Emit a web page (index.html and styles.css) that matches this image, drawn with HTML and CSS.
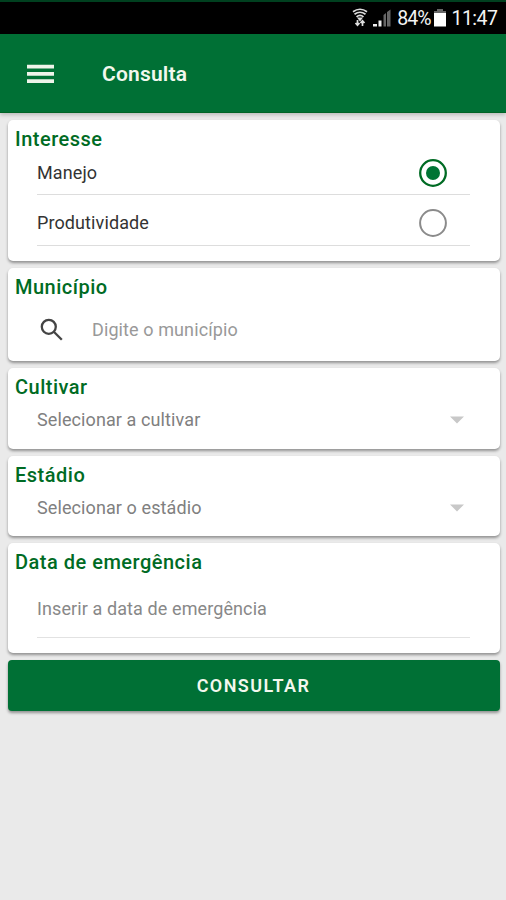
FILE: index.html
```html
<!DOCTYPE html>
<html lang="pt-BR">
<head>
<meta charset="utf-8">
<title>Consulta</title>
<link rel="stylesheet" href="styles.css">
</head>
<body>
<div class="status">
  <svg class="wifi" width="16" height="19" viewBox="0 0 16 19" fill="none" stroke="#ddd" stroke-width="1.7"><path d="M1 3.800Q8-1.300 15 3.800M2.500 6.300Q8 2.200 13.500 6.300M4.500 8.800Q8 6 11.500 8.800"/><path d="M5 9.500h6l-3 4z" fill="#ddd" stroke="none"/><path d="M5.500 12v5M3.500 15l2 2.300 2-2.300M10.500 18v-5M8.500 15l2-2.300 2 2.300"/></svg>
  <svg class="signal" width="18" height="18" viewBox="0 0 18 18"><path fill="#eee" d="M0 15h4v2.500H0zM5.500 11.500h3v6h-3z"/><path fill="#666" d="M10.500 6l2.500-2v13.500h-2.500zM14 3l3.500-2.500v17H14z"/></svg>
  <span class="percent">84%</span>
  <svg class="battery" width="12" height="18" viewBox="0 0 12 18"><path fill="#666" d="M3 0h6v2h3v3H0V2h3z"/><path fill="#fff" d="M0 4h12v13.500H0z"/></svg>
  <span class="clock">11:47</span>
</div>
<header class="bar">
  <svg width="27" height="20" viewBox="0 0 27 20" fill="#eef4ea"><path d="M0 .8h27v3.700H0zM0 8h27v3.700H0zM0 15.300h27V19H0z"/></svg>
  <h1>Consulta</h1>
</header>
<main>
  <section class="card interest">
    <h2>Interesse</h2>
    <div class="option"><span>Manejo</span><svg class="radio" width="30" height="30" viewBox="0 0 30 30"><circle cx="15" cy="15" r="12.800" fill="none" stroke="#006b24" stroke-width="2.300"/><circle cx="15" cy="15" r="7" fill="#007434"/></svg></div>
    <div class="option"><span>Produtividade</span><svg class="radio" width="30" height="30" viewBox="0 0 30 30"><circle cx="15" cy="15" r="12.900" fill="none" stroke="#8b8b8b" stroke-width="2"/></svg></div>
  </section>
  <section class="card city">
    <h2>Município</h2>
    <div class="search"><svg width="24" height="24" viewBox="0 0 24 24" fill="none" stroke="#444" stroke-width="2.300"><circle cx="8.800" cy="8.800" r="7"/><path d="M13.800 13.800l8 8"/></svg><span>Digite o município</span></div>
  </section>
  <section class="card cultivar">
    <h2>Cultivar</h2>
    <div class="select"><span>Selecionar a cultivar</span><svg width="14" height="8" viewBox="0 0 14 8"><path fill="#c8c8c8" d="M0 .5h14L7 7.500z"/></svg></div>
  </section>
  <section class="card stage">
    <h2>Estádio</h2>
    <div class="select"><span>Selecionar o estádio</span><svg width="14" height="8" viewBox="0 0 14 8"><path fill="#c8c8c8" d="M0 .5h14L7 7.500z"/></svg></div>
  </section>
  <section class="card date">
    <h2>Data de emergência</h2>
    <div class="field">Inserir a data de emergência</div>
  </section>
  <button type="button">CONSULTAR</button>
</main>
</body>
</html>
```
FILE: styles.css
```css
* { box-sizing: border-box; }
body {
  margin: 0;
  height: 900px;
  overflow: hidden;
  background: #eaeaea;
  font-family: Roboto, "Liberation Sans", sans-serif;
}
svg { display: block; flex: none; }
.status {
  height: 34px;
  border-top: 2px solid #00401f;
  background: #000;
  color: #f4f4f4;
  display: flex;
  align-items: flex-start;
  justify-content: flex-end;
  padding: 5px 8.500px 0 0;
  font-size: 19.5px;
  line-height: 23px;
}
.wifi { margin: 1px 5px 0 0; }
.signal { margin: 2px 6px 0 0; }
.battery { margin: 2px 5px 0 4px; }
.percent { letter-spacing: -1px; }
.clock { letter-spacing: -.5px; }
.bar {
  height: 78.5px;
  background: #007035;
  border-bottom: 1px solid #006425;
  box-shadow: 0 2px 4px rgba(0,0,0,.2);
  display: flex;
  align-items: center;
  padding: 2px 0 0 26.500px;
  gap: 48.5px;
}
h1 {
  margin: 0;
  color: #f3f8ee;
  font-size: 21px;
  line-height: 24px;
  font-weight: 600;
  letter-spacing: .2px;
}
main {
  padding: 7.500px 6.500px 0 7.500px;
  display: flex;
  flex-direction: column;
  gap: 7px;
}
.card {
  background: #fff;
  border-radius: 5px;
  box-shadow: 0 2px 3px rgba(0,0,0,.38);
  padding: 7px 30px 0 7.500px;
}
.interest { height: 140.500px; }
.city { height: 93.500px; }
.cultivar, .stage { height: 80.500px; }
.date { height: 110px; }
h2 {
  margin: 0;
  color: #006b24;
  font-size: 20px;
  line-height: 24px;
  font-weight: 500;
  letter-spacing: .5px;
}
.option, .select, .field { margin-left: 22px; }
.option {
  display: flex;
  justify-content: space-between;
  height: 50.500px;
  padding: 16px 21.500px 0 0;
  border-bottom: 1.500px solid #ddd;
  color: #333;
  font-size: 18px;
  line-height: 24px;
  letter-spacing: .1px;
}
h2 + .option { height: 44px; padding-top: 10px; }
.radio { margin-top: -3px; }
.search, .select {
  display: flex;
  align-items: center;
  color: #808080;
  font-size: 18px;
  line-height: 24px;
  letter-spacing: .1px;
}
.search { margin: 19px 0 0 25px; gap: 28px; color: #999; }
.select { margin-top: 9px; justify-content: space-between; padding-right: 5.500px; }
.field {
  margin-top: 10px;
  height: 54px;
  padding-top: 13px;
  border-bottom: 1.500px solid #e2e2e2;
  color: #888;
  font-size: 18px;
  line-height: 24px;
  letter-spacing: .1px;
}
button {
  height: 51px;
  border: 0;
  border-radius: 4px;
  background: #007035;
  color: #f3f8ee;
  box-shadow: 0 2px 3px rgba(0,0,0,.38);
  font: 600 18px/24px Roboto, "Liberation Sans", sans-serif;
  letter-spacing: 1.400px;
}
```
